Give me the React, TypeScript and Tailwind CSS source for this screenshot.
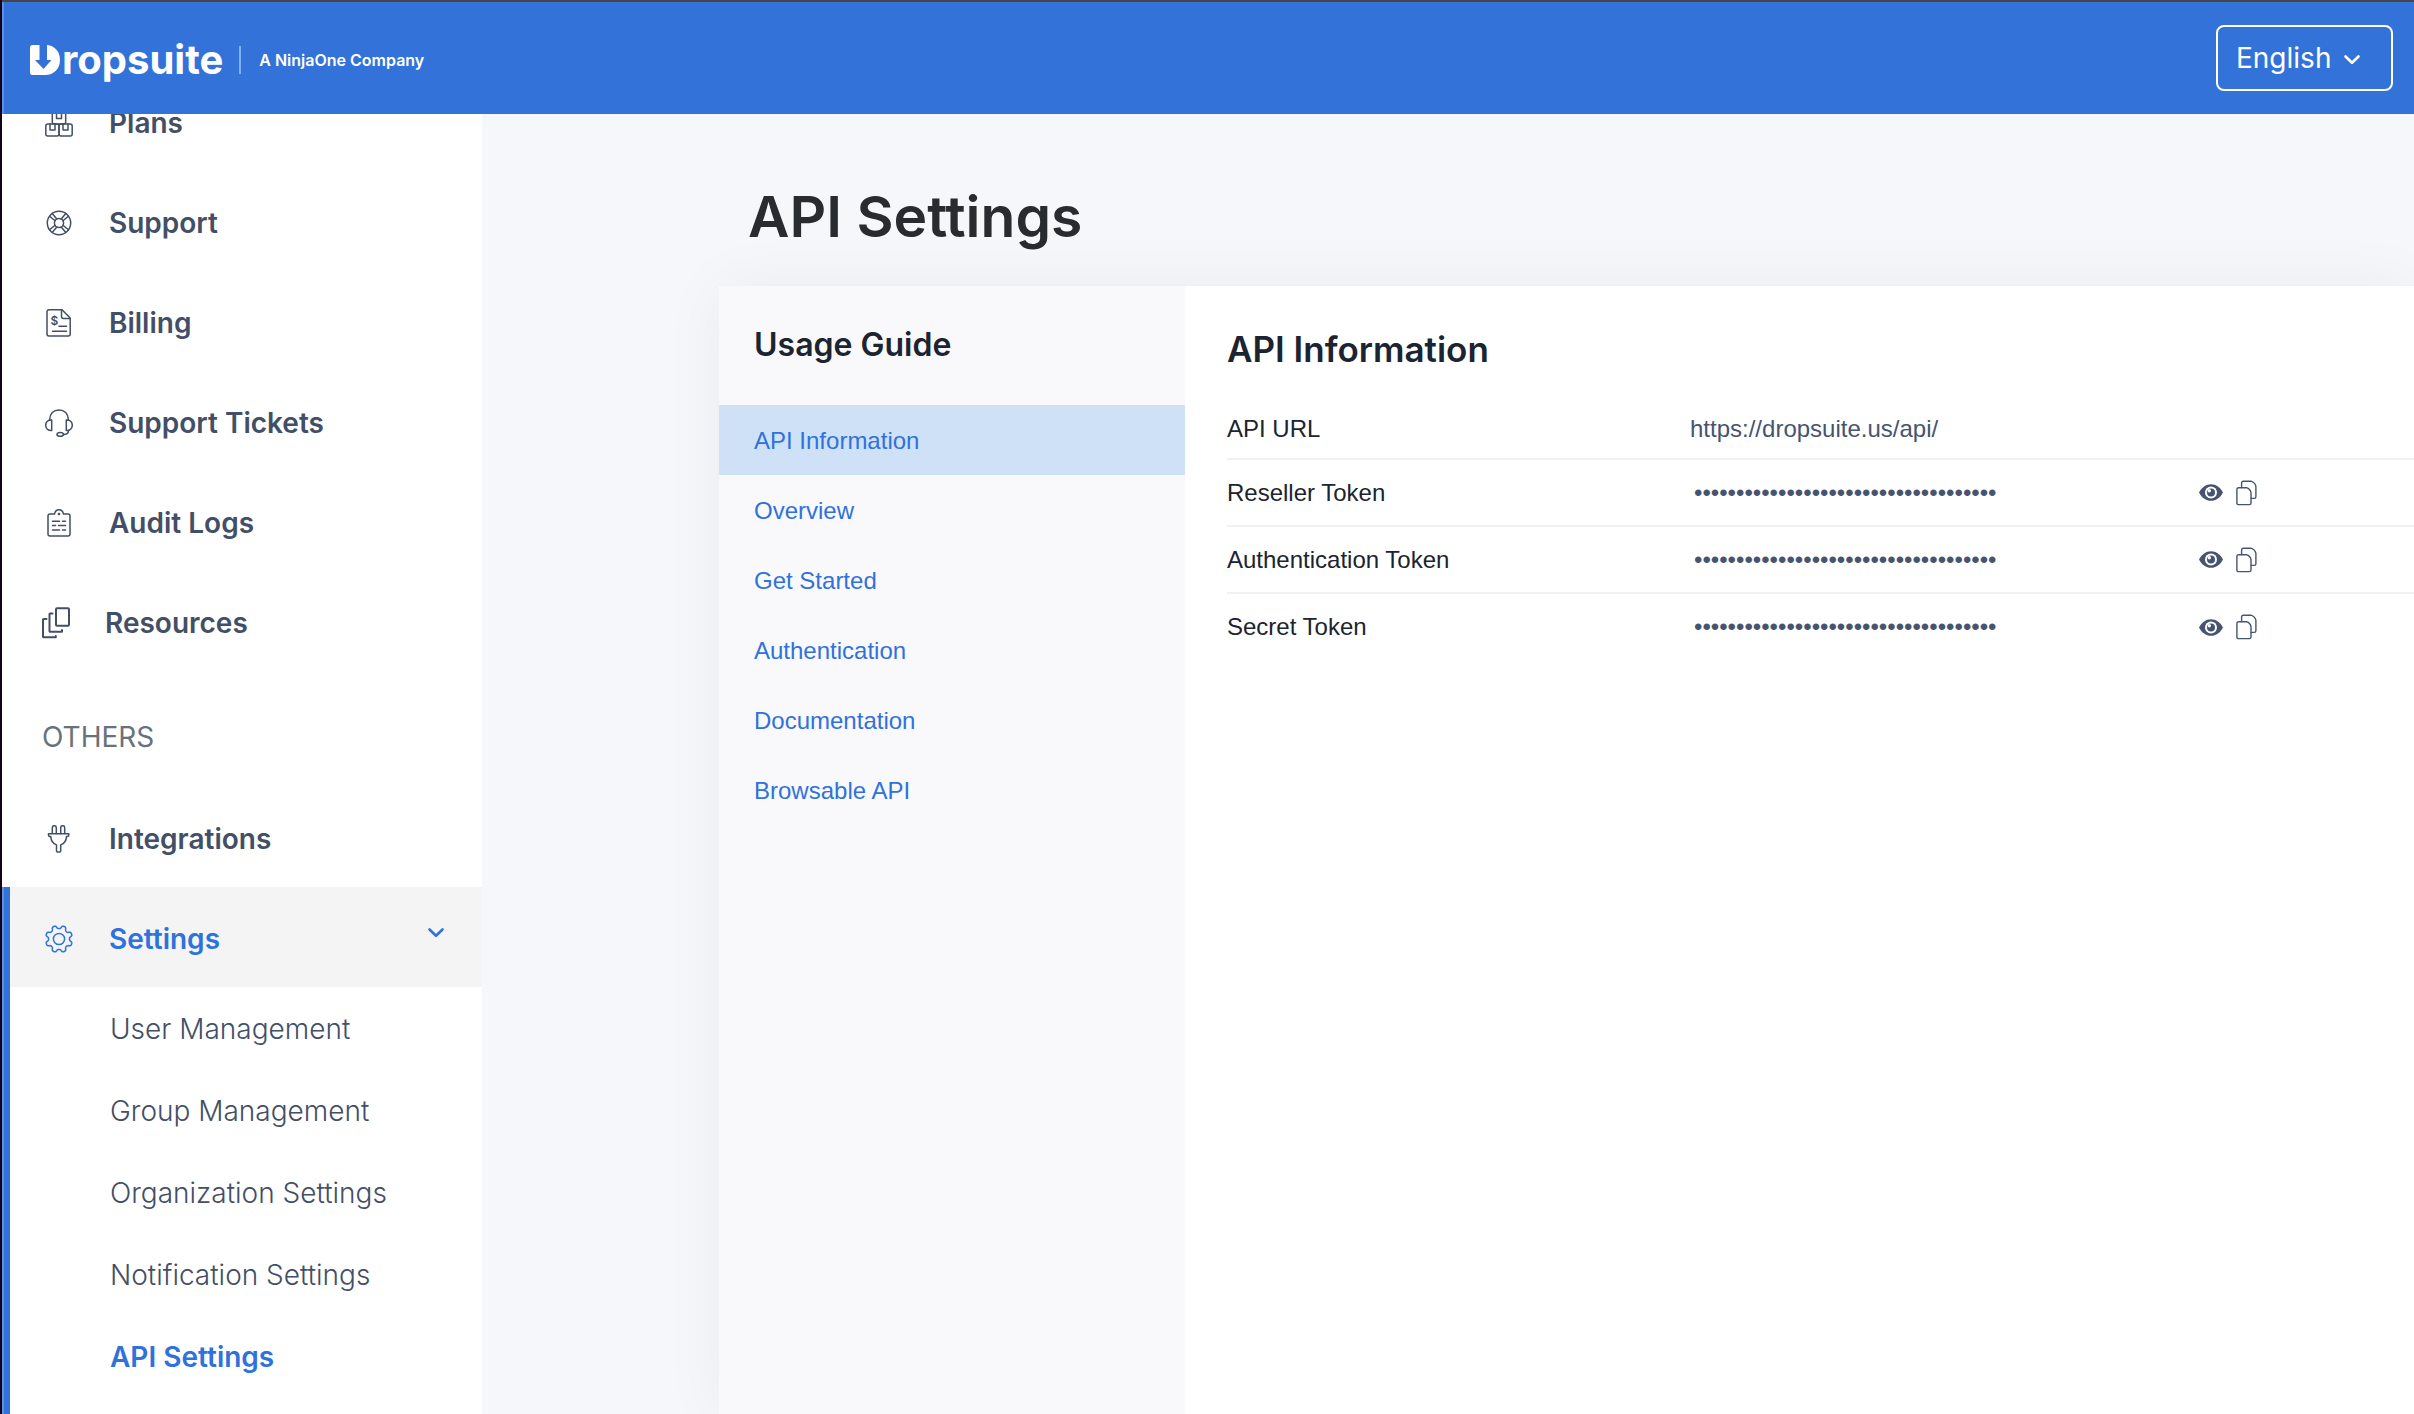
import React from "react";

const INTER = "font-['Inter',sans-serif]";

/* ---------- icons ---------- */

const line = {
  fill: "none",
  stroke: "currentColor",
  strokeWidth: 1.5,
  strokeLinecap: "round" as const,
  strokeLinejoin: "round" as const,
  "aria-hidden": true,
};

function gearOutline() {
  const points: string[] = [];
  for (let i = 0; i < 160; i++) {
    const t = (i / 160) * Math.PI * 2;
    const wave = Math.tanh(1.9 * Math.cos(8 * t));
    const r = 12 - 1.6 * wave;
    points.push(`${(14 + r * Math.sin(t)).toFixed(2)} ${(14 - r * Math.cos(t)).toFixed(2)}`);
  }
  return `M${points.join("L")}Z`;
}
const GEAR = gearOutline();

const BoxesIcon = () => (
  <svg viewBox="0 0 28 28" className="size-7" {...line}>
    <rect x="0.8" y="15" width="13.2" height="12" rx="2" />
    <rect x="14" y="15" width="13.2" height="12" rx="2" />
    <rect x="7.3" y="2.6" width="13.4" height="12.4" rx="2" />
    <path d="M5 15v6h5v-6M18 15v6h5v-6M11.5 3v6.500h5V3" />
  </svg>
);

const LifebuoyIcon = () => (
  <svg viewBox="0 0 28 28" className="size-7" {...line}>
    <circle cx="14" cy="14" r="11.700" />
    <circle cx="14" cy="14" r="4.600" />
    <path d="M4.600 7.200l5.400 4.600M7.200 4.600l4.600 5.400M23.400 7.200l-5.400 4.600M20.800 4.600l-4.600 5.400M4.600 20.800l5.400-4.600M7.200 23.400l4.600-5.400M23.400 20.800l-5.400-4.600M20.800 23.400l-4.600-5.400" />
  </svg>
);

const InvoiceIcon = () => (
  <svg viewBox="0 0 28 28" className="size-7" {...line}>
    <path d="M4 .8h13L25.200 9v16a2 2 0 0 1-2 2H4a2 2 0 0 1-2-2V2.800a2 2 0 0 1 2-2z" />
    <path d="M16.500 1v6.500a2 2 0 0 0 2 2H25M14 17.300h7.500M7.500 22.300h14" />
    <text x="5.500" y="15.500" fontSize="12" fontFamily="Inter, sans-serif" fontWeight="600" fill="currentColor" stroke="none">
      $
    </text>
  </svg>
);

const HeadsetIcon = () => (
  <svg viewBox="0 0 28 28" className="size-7" {...line}>
    <path d="M4.700 10.500C4.700 4.700 8.500.9 14 .9s9.300 3.800 9.300 9.600" />
    <path d="M6.700 11v10.500c-3.600.3-6-2-6-5.300s2.400-5.500 6-5.200zM21.300 11v10.500c3.600.3 6-2 6-5.300s-2.400-5.500-6-5.200z" />
    <path d="M23.500 21.500c0 2.700-1.500 4-5 4" />
    <ellipse cx="15.200" cy="25.400" rx="3.200" ry="1.900" />
  </svg>
);

const ClipboardIcon = () => (
  <svg viewBox="0 0 28 28" className="size-7" {...line}>
    <path d="M9.500 5H5a2 2 0 0 0-2 2v18a2 2 0 0 0 2 2h18a2 2 0 0 0 2-2V7a2 2 0 0 0-2-2h-4.500C18 2.300 16.300.8 14 .8S10 2.300 9.500 5z" />
    <path d="M7.500 12.300h7M17.500 12.300h3M7.500 16.600h3M13.500 16.600h7M7.500 21h7M17.500 21h3" />
    <circle cx="14" cy="5" r="0.600" />
  </svg>
);

const PagesIcon = () => (
  <svg viewBox="0 0 28 32" className="h-8 w-7" {...line} strokeWidth={2}>
    <rect x="14" y="1.200" width="13" height="17.500" rx="1" />
    <path d="M10.500 6.500H8a.5.5 0 0 0-.5.500v17a.8.8 0 0 0 .8.800h11.700V23" />
    <path d="M4.500 12H1.500a.5.5 0 0 0-.5.500v17a.8.800 0 0 0 .8.800h12V29" />
  </svg>
);

const PlugIcon = () => (
  <svg viewBox="0 0 28 28" className="size-7" {...line}>
    <path d="M7.300 8.500V2.700a2 2 0 0 1 4 0v5.800M15.700 8.500V2.700a2 2 0 0 1 4 0v5.800" />
    <path d="M3.500 8.800h20.300v1.300a1.500 1.500 0 0 1-1.500 1.500h-.8c-.2 4.200-2.200 7-5.800 8.300v6.200a1 1 0 0 1-1 1h-2.200a1 1 0 0 1-1-1v-6.200c-3.600-1.300-5.500-4.100-5.700-8.300H5a1.500 1.500 0 0 1-1.500-1.500z" />
  </svg>
);

const GearIcon = () => (
  <svg viewBox="0 0 28 28" className="size-7" {...line}>
    <path d={GEAR} />
    <circle cx="14" cy="14" r="5.600" />
  </svg>
);

const ChevronIcon = () => (
  <svg viewBox="0 0 18 12" className="h-3 w-[18px]" {...line} strokeWidth={2.600}>
    <path d="M2.500 2.500L9 8.800l6.500-6.300" />
  </svg>
);

const EyeIcon = () => (
  <svg viewBox="0 0 24 17" className="h-[17px] w-6" aria-hidden="true">
    <path fill="currentColor" d="M0 8.500C2.600 3.300 7 .2 12 .2s9.400 3.100 12 8.300c-2.600 5.200-7 8.300-12 8.300S2.600 13.700 0 8.500z" />
    <circle cx="12" cy="8.500" r="6" fill="#fff" />
    <circle cx="12" cy="8.500" r="4" fill="currentColor" />
    <circle cx="10.300" cy="6.700" r="1.700" fill="#fff" />
  </svg>
);

const CopyIcon = () => (
  <svg viewBox="0 0 21 26" className="h-[26px] w-[21px]" {...line} strokeWidth={1.400}>
    <path d="M2.500 7.700h8c2.400.8 4 2.600 4.500 5V23a1.600 1.600 0 0 1-1.600 1.600H2.500A1.600 1.600 0 0 1 .9 23V9.300a1.600 1.600 0 0 1 1.600-1.600z" />
    <path d="M5.600 7.500V2.800A1.600 1.600 0 0 1 7.200 1.200h7.800c2.400.8 4.300 2.700 4.900 5.200v10.400a1.600 1.600 0 0 1-1.600 1.600h-3" />
  </svg>
);

const LogoMark = () => (
  <svg viewBox="0 0 30 30" className="size-[30px]" aria-hidden="true">
    <path
      fill="currentColor"
      d="M2.500 0H9.500v15H5l8.500 9 8-9H17V0c8 .8 13 6.800 13 15 0 8.800-6 15-15 15H2.500A2.500 2.500 0 0 1 0 27.500v-25A2.500 2.500 0 0 1 2.500 0z"
    />
  </svg>
);

/* ---------- data ---------- */

const mainNav = [
  { label: "Plans", Icon: BoxesIcon },
  { label: "Support", Icon: LifebuoyIcon },
  { label: "Billing", Icon: InvoiceIcon },
  { label: "Support Tickets", Icon: HeadsetIcon },
  { label: "Audit Logs", Icon: ClipboardIcon },
];

const settingsNav = [
  "User Management",
  "Group Management",
  "Organization Settings",
  "Notification Settings",
  "API Settings",
];

const guideNav = ["API Information", "Overview", "Get Started", "Authentication", "Documentation", "Browsable API"];

const tokens = ["Reseller Token", "Authentication Token", "Secret Token"];
const MASKED = "x".repeat(36);

/* ---------- page parts ---------- */

function Header() {
  return (
    <header className="relative z-10 flex h-28 shrink-0 items-center justify-between border-l-2 border-[#5b8fe1] bg-[#3272d9] pr-[21px] pl-[26px] text-white">
      <a href="#home" className="flex items-center pt-1">
        <span className="flex items-center gap-0.5" aria-label="Dropsuite">
          <LogoMark />
          <span className={`${INTER} text-[40px] leading-10 font-bold`}>ropsuite</span>
        </span>
        <span className="ml-4 h-7 w-0.5 bg-[#7db2f3]" />
        <span className={`${INTER} ml-[18px] text-base leading-6 font-semibold`}>A NinjaOne Company</span>
      </a>
      <div className="relative">
        <select
          aria-label="Language"
          className={`${INTER} h-[66px] w-[177px] cursor-pointer appearance-none rounded-lg border-2 border-white bg-transparent pl-[18px] text-[28px] leading-9`}
        >
          <option>English</option>
        </select>
        <span className="pointer-events-none absolute top-[29px] right-8">
          <ChevronIcon />
        </span>
      </div>
    </header>
  );
}

const rowClass = "flex h-[100px] items-center pt-1 pl-[43px]";

function Sidebar() {
  return (
    <aside className={`${INTER} -mt-[43px] flex w-[480px] shrink-0 flex-col bg-white text-[28px] leading-9 text-[#434f66]`}>
      <nav className="flex flex-1 flex-col" aria-label="Main">
        <ul>
          {mainNav.map(({ label, Icon }) => (
            <li key={label}>
              <a href="#nav" className={`${rowClass} gap-9 font-semibold`}>
                <Icon />
                {label}
              </a>
            </li>
          ))}
          <li>
            <a href="#nav" className="flex h-[100px] items-center gap-[35px] pt-1 pl-10 font-semibold">
              <PagesIcon />
              Resources
            </a>
          </li>
        </ul>
        <h2 className="flex h-[116px] items-center pt-4 pl-10 text-[#69727b]">OTHERS</h2>
        <ul className="flex flex-1 flex-col">
          <li>
            <a href="#nav" className={`${rowClass} gap-9 font-semibold`}>
              <PlugIcon />
              Integrations
            </a>
          </li>
          <li className="flex flex-1 border-l-2 border-[#5b8fe1]">
            <div className="flex-1 border-l-6 border-[#3272d9]">
              <button
                type="button"
                aria-expanded="true"
                className="flex h-[100px] w-full cursor-pointer items-center gap-9 bg-[#f4f4f4] pt-1 pr-[37px] pl-[35px] font-semibold text-[#2f72db]"
              >
                <GearIcon />
                <span className="flex-1 text-left">Settings</span>
                <span className="pb-3">
                  <ChevronIcon />
                </span>
              </button>
              <ul className="pt-px pl-[100px]">
                {settingsNav.map((label) => (
                  <li key={label}>
                    <a
                      href="#settings"
                      className={
                        label === "API Settings"
                          ? "flex h-[82px] items-center font-semibold text-[#2f72db]"
                          : "flex h-[82px] items-center font-light"
                      }
                    >
                      {label}
                    </a>
                  </li>
                ))}
              </ul>
            </div>
          </li>
        </ul>
      </nav>
    </aside>
  );
}

function UsageGuide() {
  return (
    <nav className="w-[466px] shrink-0 bg-[#f9f9fc]" aria-label="Usage guide">
      <h2 className={`${INTER} flex h-[119px] items-center pb-0.5 pl-[35px] text-[32px] leading-10 font-semibold text-[#1b2430]`}>
        Usage Guide
      </h2>
      <ul>
        {guideNav.map((label, i) => (
          <li key={label}>
            <a
              href="#guide"
              className={
                i === 0
                  ? "flex h-[70px] items-center bg-[#cfe1f7] pt-0.5 pl-[35px] text-[#2f72db]"
                  : "flex h-[70px] items-center pt-0.5 pl-[35px] text-[#2f72db]"
              }
            >
              {label}
            </a>
          </li>
        ))}
      </ul>
    </nav>
  );
}

function ApiInformation() {
  return (
    <section className="min-w-0 flex-1 bg-white pt-[39px] pl-[42px]">
      <h2 className={`${INTER} text-[35px] leading-12 font-semibold text-[#1b2430]`}>API Information</h2>
      <table className="mt-[26px] w-full table-fixed border-collapse text-left text-[#1b2430]">
        <colgroup>
          <col className="w-[463px]" />
          <col className="w-[509px]" />
          <col />
        </colgroup>
        <tbody>
          <tr className="h-[60px] border-b-2 border-[#f1f1f1]">
            <th scope="row" className="font-normal">
              API URL
            </th>
            <td className="text-[#465470]">https://dropsuite.us/api/</td>
            <td />
          </tr>
          {tokens.map((label, i) => (
            <tr key={label} className="h-[67px] border-b-2 border-[#f1f1f1] last:border-b-0">
              <th scope="row" className="font-normal">
                <label htmlFor={`token-${i}`}>{label}</label>
              </th>
              <td className="pl-1">
                <input
                  id={`token-${i}`}
                  type="password"
                  readOnly
                  value={MASKED}
                  className="h-10 w-[360px] bg-transparent text-[#465470]"
                />
              </td>
              <td className="text-[#465470]">
                <div className="flex items-center gap-[13px]">
                  <button type="button" aria-label={`Show ${label}`} className="cursor-pointer">
                    <EyeIcon />
                  </button>
                  <button type="button" aria-label={`Copy ${label}`} className="cursor-pointer">
                    <CopyIcon />
                  </button>
                </div>
              </td>
            </tr>
          ))}
        </tbody>
      </table>
    </section>
  );
}

export default function App() {
  return (
    <div className="flex min-h-screen border-l-2 border-[#12021c] bg-[#f6f7fb] font-['Liberation_Sans',sans-serif] text-2xl">
      <div className="flex min-w-0 flex-1 flex-col overflow-hidden border-t-2 border-[#464646]">
        <Header />
        <div className="flex flex-1">
          <Sidebar />
          <main className="flex min-w-0 flex-1 flex-col pt-[71px] pl-[237px]">
            <h1 className={`${INTER} pl-[29px] text-[57px] leading-16 font-semibold text-[#282b2f]`}>API Settings</h1>
            <div className="mt-[37px] flex flex-1 shadow-[0_0_60px_rgba(33,37,41,0.05)]">
              <UsageGuide />
              <ApiInformation />
            </div>
          </main>
        </div>
      </div>
    </div>
  );
}
